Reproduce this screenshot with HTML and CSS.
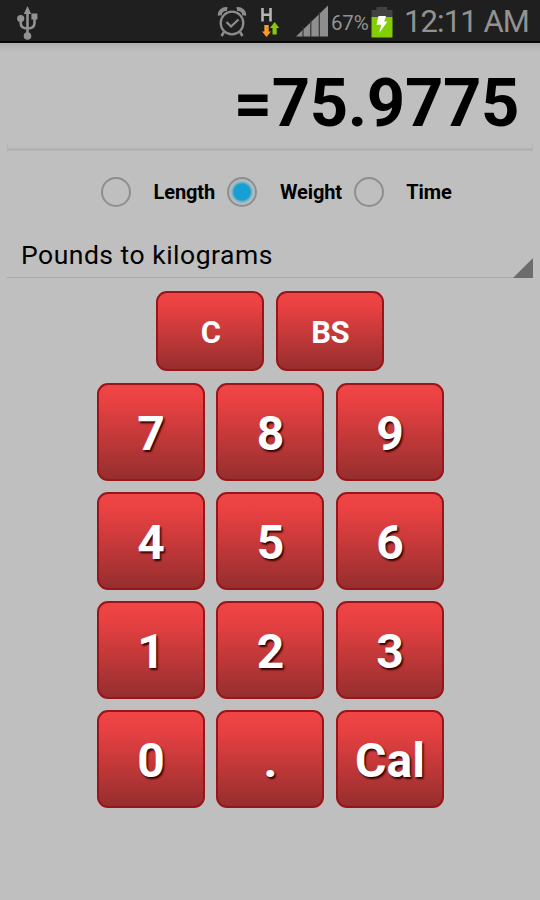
FILE: index.html
```
<!DOCTYPE html>
<html lang="en">
<head>
<meta charset="utf-8">
<title>Unit converter</title>
<link rel="stylesheet" href="styles.css">
</head>
<body>
<header class="status">
  <svg class="usb" width="24" height="36" viewBox="0 0 24 36" fill="none" stroke="#929292" stroke-width="2.6">
    <path d="M11.5 10V31M4.7 13V19C4.7 23 8 24.5 11.5 24.5S18.5 23 18.5 19V12"/>
    <path d="M11.5 2L15.2 10H7.8Z" fill="#929292" stroke="none"/>
    <circle cx="4.7" cy="14.5" r="3.6" fill="#929292" stroke="none"/>
    <circle cx="11.5" cy="32" r="3.8" fill="#929292" stroke="none"/>
    <rect x="15.4" y="9.5" width="6" height="6" fill="#929292" stroke="none"/>
  </svg>
  <div class="tray">
    <svg class="alarm" width="30" height="32" viewBox="0 0 30 32" fill="none" stroke="#8c8c8c">
      <circle cx="15" cy="17" r="11.3" stroke-width="2.3"/>
      <path d="M9.5 16L14 20.5L21.5 13.5" stroke-width="2.3"/>
      <path d="M2.8 9.5A6 6 0 0 1 10.2 3.2M19.8 3.2A6 6 0 0 1 27.2 9.5" stroke-width="4"/>
      <path d="M7 26L4.5 30M23 26L25.5 30" stroke-width="2.6"/>
    </svg>
    <svg class="data" width="20" height="32" viewBox="0 0 20 32">
      <path d="M2.5 2V15.5M10.5 2V15.5M2.5 8.7H10.5" fill="none" stroke="#b5b5b5" stroke-width="2.6"/>
      <path d="M4.3 19H8.7V25.5H11L6.5 31L2 25.5H4.3Z" fill="#f79a2a"/>
      <path d="M12.5 28.5H16.7V22H19.3L14.6 16L10 22H12.5Z" fill="#86c80a"/>
    </svg>
    <svg class="signal" width="34" height="32" viewBox="0 0 34 32">
      <path d="M1 31.5L33 .5V31.5Z" fill="#8e8e8e"/>
      <path d="M8 22V32M15.8 15V32M24.3 7V32" stroke="#363636" stroke-width="1.2"/>
    </svg>
    <span class="percent">67%</span>
    <svg class="battery" width="22" height="32" viewBox="0 0 22 32">
      <path d="M5.5 1H16V4H21.5V11H.5V4H5.5Z" fill="#424242"/>
      <path d="M.5 11H21.5V31.5H.5Z" fill="#82ce00"/>
      <path d="M7.5 10H15L13.2 15.5H16.5L8.2 27L10.2 18.8H5.5Z" fill="#fff"/>
    </svg>
    <span class="clock">12:11 AM</span>
  </div>
</header>
<main>
  <div class="display">=75.9775</div>
  <div class="modes">
    <label class="mode"><span class="radio"></span><span>Length</span></label>
    <label class="mode"><span class="radio on"></span><span>Weight</span></label>
    <label class="mode"><span class="radio"></span><span>Time</span></label>
  </div>
  <div class="spinner"><span>Pounds to kilograms</span>
    <svg width="20" height="20" viewBox="0 0 20 20"><path d="M0 20L20 0V20Z" fill="#6c6c6c"/></svg>
  </div>
  <div class="edit"><button class="key small">C</button><button class="key small">BS</button></div>
  <div class="pad">
    <button class="key">7</button><button class="key">8</button><button class="key">9</button>
    <button class="key">4</button><button class="key">5</button><button class="key">6</button>
    <button class="key">1</button><button class="key">2</button><button class="key">3</button>
    <button class="key">0</button><button class="key">.</button><button class="key">Cal</button>
  </div>
</main>
</body>
</html>
```
FILE: styles.css
```
* { box-sizing: border-box; }
body {
  margin: 0;
  width: 540px;
  height: 900px;
  overflow: hidden;
  background: #bfbfbf;
  color: #000;
  font-family: Roboto, "Liberation Sans", sans-serif;
}
.status {
  height: 43px;
  padding: 0 11px 0 16px;
  display: flex;
  justify-content: space-between;
  align-items: flex-start;
  background: #1f1f1f;
  border-bottom: 2px solid #060606;
  color: #929292;
}
.status svg { display: block; flex: none; }
.usb { margin-top: 4px; }
.tray { display: flex; align-items: flex-start; }
.alarm { margin-top: 6px; }
.data { margin: 6px 0 0 13px; }
.signal { margin: 5px 0 0 15px; }
.percent { width: 42px; padding-left: 2px; line-height: 46px; font-size: 20.5px; letter-spacing: -0.2px; white-space: nowrap; }
.battery { margin-top: 6px; }
.clock {
  width: 136px;
  text-align: right;
  line-height: 43px;
  font-size: 31px;
  letter-spacing: -0.9px;
  white-space: nowrap;
}
main {
  height: 857px;
  background: linear-gradient(#adadad, #bfbfbf 9px);
}
.display {
  height: 108px;
  margin: 0 7px;
  padding: 10px 13px 0 0;
  border: 2px solid #b3b3b3;
  border-width: 0 1px 3px;
  border-image: linear-gradient(transparent 94%, #b3b3b3 94%) 1 1 3;
  text-align: right;
  font-size: 67px;
  font-weight: 700;
  letter-spacing: -0.4px;
  line-height: 100px;
}
.modes { height: 82px; padding-left: 101px; display: flex; align-items: center; }
.mode {
  width: 126.4px;
  display: flex;
  align-items: center;
  gap: 22.5px;
  font-size: 20px;
  font-weight: 700;
  letter-spacing: -0.1px;
  line-height: 30px;
  white-space: nowrap;
}
.radio {
  width: 30px;
  height: 30px;
  flex: none;
  border: 2px solid #8e8e8e;
  border-radius: 50%;
}
.radio.on { background: radial-gradient(circle, #159fd3 0 8px, #73adc2 9.5px, #a8bcc3 11px, #b3bec1 14px); }
.spinner {
  height: 45px;
  margin: 0 7px;
  padding-left: 14px;
  display: flex;
  justify-content: space-between;
  align-items: flex-end;
  border-bottom: 1px solid #a8a8a8;
  font-size: 26.5px;
  letter-spacing: 0.5px;
  line-height: 45px;
}
.spinner svg { display: block; margin-bottom: -1px; }
.edit { display: flex; justify-content: center; gap: 11.5px; margin-top: 13px; }
.pad {
  display: grid;
  grid-template-columns: repeat(3, 108px);
  grid-auto-rows: 98px;
  gap: 11px 11.5px;
  justify-content: center;
  margin-top: 12px;
}
.key {
  width: 108px;
  padding: 4px 0 0 1px;
  border: 2px solid #991519;
  border-radius: 11px;
  background: linear-gradient(#f04545, #e94142 18%, #962e2e);
  color: #fff;
  font: 700 48px/1 Roboto, "Liberation Sans", sans-serif;
  text-shadow: 1.5px 2px 2px #300;
}
.small { height: 80px; padding: 2px 0 0 1px; font-size: 31px; letter-spacing: -0.4px; text-shadow: none; }
```
